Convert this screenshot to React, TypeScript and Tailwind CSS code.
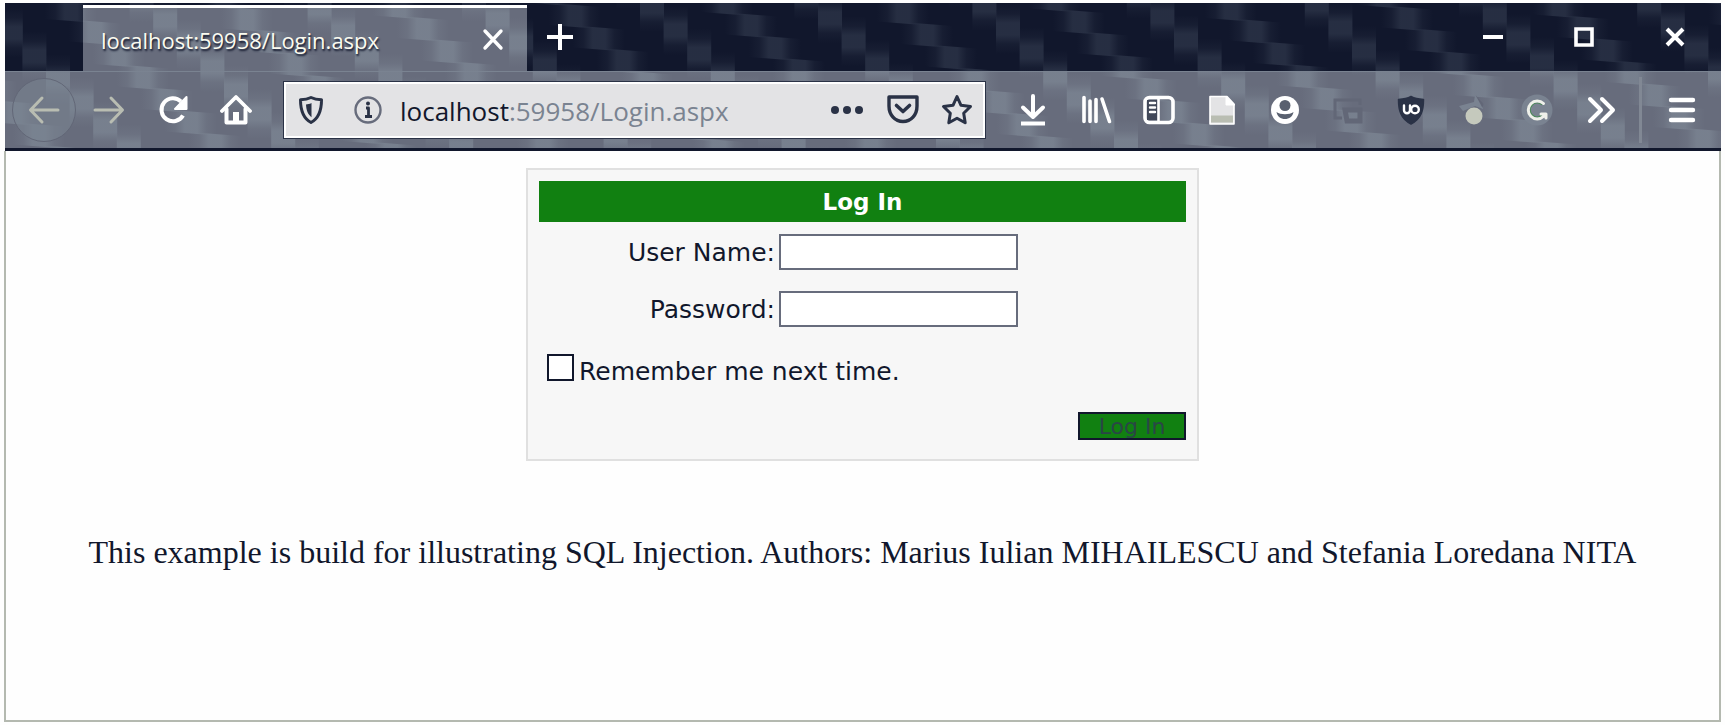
import { useId, type ReactNode } from "react";

const CHAINS = [-4, -3, -2, -1, 0, 1, 2, 3, 4, 5, 6, 7];
const STEPS = [-8, -7, -6, -5, -4, -3, -2, -1, 0, 1, 2, 3, 4, 5, 6, 7, 8, 9, 10];

/* Woven theme texture; x and y are the origin of the shared weave. */
function Weave({ x, y, className }: { x: number; y: number; className: string }) {
  const id = useId().replace(/[^a-zA-Z0-9]/g, "");
  const stops = (
    <>
      <stop offset="0" stopColor="currentColor" stopOpacity="0" />
      <stop offset="0.2" stopColor="currentColor" stopOpacity="0.25" />
      <stop offset="0.38" stopColor="currentColor" stopOpacity="0.85" />
      <stop offset="0.62" stopColor="currentColor" stopOpacity="0.85" />
      <stop offset="0.8" stopColor="currentColor" stopOpacity="0.25" />
      <stop offset="1" stopColor="currentColor" stopOpacity="0" />
    </>
  );
  return (
    <svg aria-hidden="true" className={`pointer-events-none absolute inset-0 size-full ${className}`}>
      <defs>
        <linearGradient id={`${id}v`} x1="0" y1="0" x2="0" y2="1">{stops}</linearGradient>
        <linearGradient id={`${id}h`} x1="0" y1="0" x2="1" y2="0">{stops}</linearGradient>
      </defs>
      <g transform={`translate(${-x} ${-y})`}>
        {CHAINS.map((k) =>
          STEPS.map((i) => {
            const vx = 652 + 178 * k + 23.6 * i;
            const vy = 7 + 11 * k + 23.3 * i;
            const hx = 575 + 176 * k + 24 * i;
            const hy = 16 + 9.5 * k + 22.5 * i;
            return (
              <g key={`${k}/${i}`}>
                <rect x={vx - 12} y={vy - 25} width="24" height="50" fill={`url(#${id}v)`} />
                <path d={`M${hx - 26} ${hy - 13}l52 4v22l-52 -4z`} fill={`url(#${id}h)`} />
              </g>
            );
          }),
        )}
      </g>
    </svg>
  );
}

function Icon({ children }: { children: ReactNode }) {
  return (
    <svg
      aria-hidden="true"
      viewBox="0 0 32 32"
      className="size-8 shrink-0"
      fill="none"
      stroke="currentColor"
      strokeWidth="4"
      strokeLinecap="round"
      strokeLinejoin="round"
    >
      {children}
    </svg>
  );
}

function IconButton({ label, className, children }: { label: string; className: string; children: ReactNode }) {
  return (
    <button type="button" aria-label={label} className={`flex shrink-0 items-center justify-center ${className}`}>
      <Icon>{children}</Icon>
    </button>
  );
}

function TabStrip() {
  return (
    <div className="relative flex h-[68px] bg-[#11172c] pl-[78px] pt-[2px] text-white">
      <Weave x={5} y={3} className="text-[#2a3246]" />
      <div className="relative flex w-[444px] items-center border-t-[3px] border-white bg-[#676c7c] pl-[18px] pr-[18px]">
        <Weave x={83} y={8} className="text-[#7a8391]" />
        <span className="relative flex-1 whitespace-nowrap font-['Open_Sans','Noto_Sans',sans-serif] text-[22px] leading-8 text-[#fbfbf0] [text-shadow:1px_2px_2px_#11172c]">
          localhost:59958/Login.aspx
        </span>
        <IconButton label="Close tab" className="relative size-8">
          <path d="M8 7l16 17M24 7L8 24" strokeWidth="3.4" />
        </IconButton>
      </div>
      <IconButton label="New tab" className="relative w-[66px]">
        <path d="M3 15h26M16 2v26" strokeLinecap="butt" />
      </IconButton>
      <div className="relative flex flex-1 justify-end pr-px">
        <IconButton label="Minimize" className="w-[91px]">
          <path d="M6 15h20" strokeLinecap="butt" />
        </IconButton>
        <IconButton label="Maximize" className="w-[91px]">
          <path d="M8 7h16v16H8z" strokeWidth="3.6" strokeLinejoin="miter" />
        </IconButton>
        <IconButton label="Close" className="w-[91px]">
          <path d="M8 7l16 16M24 7L8 23" strokeLinecap="butt" />
        </IconButton>
      </div>
    </div>
  );
}

function AddressBar() {
  return (
    <div className="flex h-[58px] min-w-0 flex-1 items-center border border-[#2a3246] bg-white p-[2px]">
      <div className="flex h-full min-w-0 flex-1 items-center bg-[#e3e3e5] text-[#2a3246]">
        <IconButton label="Tracking protection" className="ml-[9px] w-8">
          <path d="M16 3.500c-3.500 1.800-7 2.200-10.500 2.300 0 11 2.500 18.500 10.500 22.700 8-4.200 10.500-11.700 10.500-22.700-3.500-.1-7-.5-10.500-2.300z" strokeWidth="3" />
          <path d="M16.500 9c-2 1-3.700 1.300-5.500 1.500.3 5.800 1.800 9.700 5.500 12.700z" fill="currentColor" stroke="none" />
        </IconButton>
        <IconButton label="Site information" className="ml-[25px] w-8">
          <circle cx="16" cy="16" r="12.500" strokeWidth="2.400" stroke="#676c7c" />
          <path d="M14 14h2.500v8M13 22.500h7" strokeWidth="2.800" strokeLinecap="butt" />
          <circle cx="16" cy="9.500" r="2" fill="currentColor" stroke="none" />
        </IconButton>
        <span className="relative ml-4 min-w-0 flex-1 pt-[2px] font-['Open_Sans','Noto_Sans',sans-serif] text-[26px] leading-9">
          <span aria-hidden="true" className="pointer-events-none block whitespace-nowrap text-[#7a8391]">
            <span className="text-[#11172c]">localhost</span>:59958/Login.aspx
          </span>
          <input aria-label="Address" type="text" className="absolute inset-0 w-full bg-transparent text-transparent outline-none" />
        </span>
        <IconButton label="Page actions" className="w-14">
          <g fill="currentColor" stroke="none">
            <circle cx="4" cy="16" r="4" />
            <circle cx="16" cy="16" r="4" />
            <circle cx="28" cy="16" r="4" />
          </g>
        </IconButton>
        <IconButton label="Save to Pocket" className="w-14">
          <path d="M2 3h28v9c0 9-6 15.500-14 15.500S2 21 2 12z" strokeWidth="3.400" />
          <path d="M9.500 11.500l6.500 6 6.500-6" strokeWidth="3.600" />
        </IconButton>
        <IconButton label="Bookmark this page" className="w-[52px]">
          <path d="M16 2.500l4 8.800 9.500 1.200-6.800 6.700 1.500 9.600-8.200-4.600-8.200 4.600 1.500-9.600-6.800-6.700 9.500-1.200z" strokeWidth="3" />
        </IconButton>
      </div>
    </div>
  );
}

function Toolbar() {
  return (
    <div className="relative flex h-[80px] items-center border-b-[3px] border-t border-b-[#11172c] border-t-[#7a8391] bg-[#676c7c] text-white">
      <Weave x={5} y={72} className="text-[#7a8391]" />
      <div className="relative flex min-w-0 flex-1 items-center">
        <IconButton label="Back" className="ml-[7px] size-[64px] rounded-full border border-[#626777] bg-[#7a8391]/60 text-[#b9bdb2]">
          <path d="M30 16H3M14 4L2.500 16 14 28" strokeWidth="3" />
        </IconButton>
        <IconButton label="Forward" className="w-[66px] text-[#b9bdb2]">
          <path d="M2 16h27M18 4l11.500 12L18 28" strokeWidth="3" />
        </IconButton>
        <IconButton label="Reload" className="w-[64px]">
          <path d="M25 21.500A11.500 11.500 0 1 1 23 7.500" strokeLinecap="butt" />
          <path d="M28.500 3v12H17z" fill="currentColor" strokeWidth="2" />
        </IconButton>
        <IconButton label="Home" className="w-[60px]">
          <path d="M2 17L16 3l14 14" strokeWidth="3.800" />
          <path d="M6.500 15v13.500h19V15" />
          <path d="M13 18h6v10h-6z" fill="currentColor" stroke="none" />
        </IconButton>
        <div className="flex min-w-0 flex-1 pl-[17px]">
          <AddressBar />
        </div>
      </div>
      <div className="relative flex shrink-0 items-center pl-[15px]">
        <IconButton label="Downloads" className="w-[63px]">
          <path d="M16 2v21M6 13.500l10 9.500 10-9.500" />
          <path d="M4 29.500h24" strokeLinecap="butt" />
        </IconButton>
        <IconButton label="Library" className="w-[63px]">
          <path d="M4 3.500v24M10 7v20.500M16 5.500v22M22 5l7.500 22.500" strokeWidth="3.600" />
        </IconButton>
        <IconButton label="Sidebars" className="w-[63px]">
          <rect x="2" y="3.500" width="28" height="25" rx="4.500" strokeWidth="3.600" />
          <path d="M4 6h11v20H4z" fill="#414859" stroke="none" />
          <path d="M15.500 4v24" strokeWidth="2.600" />
          <path d="M7 9h5M7 13.500h5M7 18h5" strokeWidth="2.400" />
        </IconButton>
        <IconButton label="Page tools" className="w-[63px]">
          <path d="M4 2.500h17l7 7.500v20H4z" fill="#e3e3e5" strokeWidth="1.600" />
          <path d="M5 21.500h22v7H5z" fill="#b9bdb2" stroke="none" />
          <path d="M20 2.500v8.500h8.500z" fill="white" strokeWidth="1" />
        </IconButton>
        <IconButton label="Account" className="w-[63px]">
          <circle cx="16" cy="16" r="14" fill="currentColor" stroke="none" />
          <circle cx="16" cy="11.500" r="5.500" fill="#59606f" stroke="none" />
          <path d="M7.500 18c4 3 13 3 17 0-.7 4.500-4.300 7-8.500 7s-7.800-2.500-8.500-7z" fill="#59606f" stroke="none" />
        </IconButton>
        <IconButton label="Containers" className="w-[63px]">
          <g stroke="#626777" strokeLinejoin="miter" strokeLinecap="butt" strokeWidth="3">
            <path d="M10 24H3V6h25v5" />
            <path d="M13 16h15v11H15z" strokeWidth="5" />
          </g>
        </IconButton>
        <IconButton label="uBlock Origin" className="w-[63px]">
          <path d="M16 2.500c-4 2.200-8 2.800-12.500 3 0 10.500 2 19.500 12.500 24.500 10.500-5 12.500-14 12.500-24.500-4.500-.2-8.500-.8-12.500-3z" fill="#2a3246" stroke="#2a3246" strokeWidth="1.500" />
          <path d="M9 11.500v4.700a3 3 0 0 0 6 0v-4.700" strokeWidth="2.400" />
          <circle cx="20" cy="15.500" r="3.800" strokeWidth="2.400" />
        </IconButton>
        <IconButton label="Privacy" className="w-[63px]">
          <path d="M17 1l8 9v5l-8-3-12 5-4-5 15-4z" fill="#7a8391" stroke="none" />
          <path d="M17.500 1l8 9-1 4z" fill="#626777" stroke="none" />
          <circle cx="16" cy="22" r="8.500" fill="#c5c9bd" stroke="none" />
        </IconButton>
        <IconButton label="Grammar" className="w-[63px]">
          <circle cx="16" cy="16" r="15.500" fill="#7a8391" stroke="none" />
          <path d="M20.500 10.500A7 7 0 1 0 20.500 21.500" stroke="#4a8a58" strokeWidth="1.200" />
          <path d="M22.500 9.500A9 9 0 1 0 22.500 22.500M25 24v-4h-5" stroke="#eef0ea" strokeWidth="3" />
        </IconButton>
        <IconButton label="More tools" className="w-[66px]">
          <path d="M5 5l11 11L5 27M17 5l11 11-11 11" />
        </IconButton>
        <span className="ml-[5px] h-[66px] w-[3px] bg-[#818894]" />
        <IconButton label="Menu" className="w-[79px]">
          <path d="M5 6h22M5 16h22M5 26h22" strokeWidth="4.400" />
        </IconButton>
      </div>
    </div>
  );
}

function LoginForm() {
  return (
    <form
      className="flex w-[673px] max-w-full flex-col border-2 border-[#e0e0e0] bg-[#f7f7f7] px-[11px] pb-[19px] pt-[11px] font-['DejaVu_Sans',sans-serif] text-[25px] leading-8 text-[#11172c]"
      onSubmit={(event) => event.preventDefault()}
    >
      <h1 className="flex h-[41px] items-center justify-center bg-[#118011] text-[23px] font-bold text-white">Log In</h1>
      <div className="mt-[12px] grid grid-cols-[236px_239px] items-center gap-x-[4px] gap-y-[21px]">
        <label htmlFor="user" className="pt-[2px] text-right">User Name:</label>
        <input id="user" type="text" className="h-[36px] border-2 border-[#676c7c] bg-white px-2 text-xl" />
        <label htmlFor="password" className="pt-[2px] text-right">Password:</label>
        <input id="password" type="password" className="h-[36px] border-2 border-[#676c7c] bg-white px-2 text-xl" />
      </div>
      <div className="mt-[27px] flex items-start gap-[5px] pl-[8px]">
        <input id="remember" type="checkbox" className="size-[27px] appearance-none border-2 border-[#11172c] bg-white" />
        <label htmlFor="remember" className="pt-[2px]">Remember me next time.</label>
      </div>
      <button type="submit" className="mt-[24px] flex h-[28px] w-[108px] items-center justify-center self-end border-2 border-[#11172c] bg-[#118011] pt-[2px] text-[22px] leading-6 text-[#2a4646]">
        Log In
      </button>
    </form>
  );
}

export default function App() {
  return (
    <div className="flex min-h-screen flex-col bg-[#fefefe] pb-[3px] pl-[5px] pr-[4px] pt-[3px]">
      <header>
        <TabStrip />
        <Toolbar />
      </header>
      <main className="-ml-px flex flex-1 flex-col items-center border-2 border-t-0 border-[#b4b9b0] pt-[17px]">
        <LoginForm />
        <p className="mt-[71px] whitespace-nowrap font-['Liberation_Serif',serif] text-[32px] leading-10 text-[#11172c]">
          This example is build for illustrating SQL Injection. Authors: Marius Iulian MIHAILESCU and Stefania Loredana NITA
        </p>
      </main>
    </div>
  );
}
